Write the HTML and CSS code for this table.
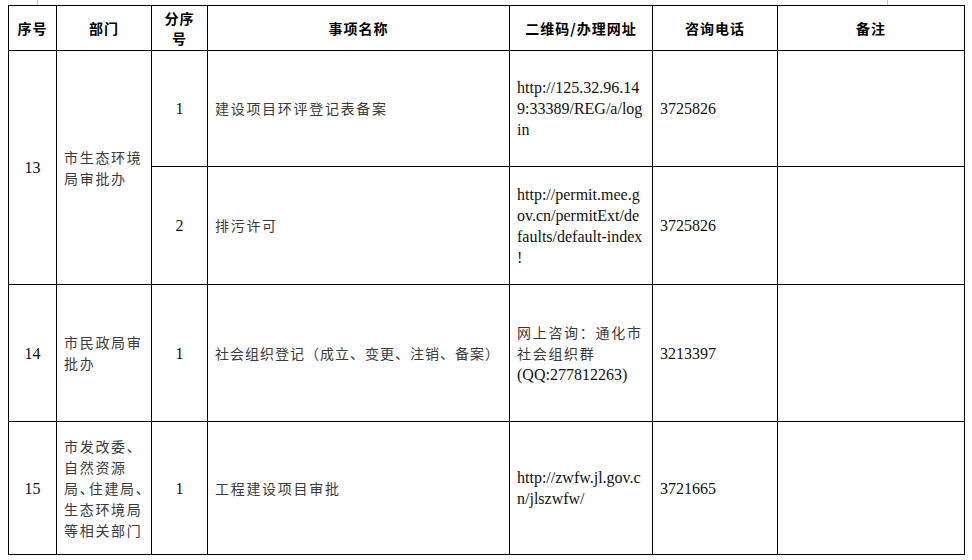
FILE: index.html
```html
<!DOCTYPE html>
<html lang="zh-CN">
<head>
<meta charset="utf-8">
<title>事项清单</title>
<link rel="stylesheet" href="styles.css">
</head>
<body>
<div class="mark mark-left"></div>
<div class="mark mark-right"></div>
<table class="grid">
  <colgroup>
    <col class="c1"><col class="c2"><col class="c3"><col class="c4"><col class="c5"><col class="c6"><col class="c7">
  </colgroup>
  <thead>
    <tr class="r-head">
      <th>序号</th>
      <th>部门</th>
      <th>分序<br>号</th>
      <th>事项名称</th>
      <th>二维码/办理网址</th>
      <th>咨询电话</th>
      <th>备注</th>
    </tr>
  </thead>
  <tbody>
    <tr class="r1">
      <td class="num" rowspan="2">13</td>
      <td class="dept" rowspan="2">市生态环境<br>局审批办</td>
      <td class="num">1</td>
      <td class="item">建设项目环评登记表备案</td>
      <td class="url">http://125.32.96.14<br>9:33389/REG/a/log<br>in</td>
      <td class="tel">3725826</td>
      <td></td>
    </tr>
    <tr class="r2">
      <td class="num">2</td>
      <td class="item">排污许可</td>
      <td class="url">http://permit.mee.g<br>ov.cn/permitExt/de<br>faults/default-index<br>!</td>
      <td class="tel">3725826</td>
      <td></td>
    </tr>
    <tr class="r3">
      <td class="num">14</td>
      <td class="dept">市民政局审<br>批办</td>
      <td class="num">1</td>
      <td class="item item-long">社会组织登记（成立、变更、注销、备案）</td>
      <td class="url"><span class="cn">网上咨询：通化市<br>社会组织群</span><br>(QQ:277812263)</td>
      <td class="tel">3213397</td>
      <td></td>
    </tr>
    <tr class="r4">
      <td class="num">15</td>
      <td class="dept">市发改委、<br>自然资源<br>局<span class="tight">、</span>住建局、<br>生态环境局<br>等相关部门</td>
      <td class="num">1</td>
      <td class="item">工程建设项目审批</td>
      <td class="url">http://zwfw.jl.gov.c<br>n/jlszwfw/</td>
      <td class="tel">3721665</td>
      <td></td>
    </tr>
  </tbody>
</table>
</body>
</html>
```

FILE: styles.css
```css
html, body {
  margin: 0;
  padding: 0;
  background: #fff;
}
body {
  padding: 5px 0 0 8px;
  position: relative;
  font-family: "Liberation Serif", "Noto Sans CJK SC", serif;
  color: #111;
}
.mark {
  position: absolute;
  top: 0;
  width: 1px;
  height: 5px;
  background: #c8c8c8;
}
.mark-left { left: 37px; }
.mark-right { left: 887px; }

.grid {
  border-collapse: collapse;
  table-layout: fixed;
  width: 956px;
}
.c1 { width: 48px; }
.c2 { width: 95px; }
.c3 { width: 56px; }
.c4 { width: 302px; }
.c5 { width: 143px; }
.c6 { width: 125px; }
.c7 { width: 187px; }

.grid th, .grid td {
  border: 1px solid #000;
  padding: 0 7px;
  vertical-align: middle;
}
.grid th {
  font-family: "Noto Sans CJK SC", sans-serif;
  font-weight: 700;
  font-size: 14px;
  line-height: 20px;
  text-align: center;
  color: #000;
  letter-spacing: 1px;
  padding: 0 2px;
}
.r-head { height: 45px; }
.r1 { height: 116px; }
.r2 { height: 118px; }
.r3 { height: 137px; }
.r4 { height: 133px; }

.num {
  text-align: center;
  font-size: 16px;
  line-height: 21px;
}
.dept, .item, .cn {
  font-family: "Noto Sans CJK SC", sans-serif;
  font-size: 14px;
  line-height: 21px;
  letter-spacing: 1.7px;
  color: #3a3a3a;
}
.dept, .item {
  white-space: nowrap;
}
.dept { padding-left: 8px; padding-right: 0; }
.item { padding-left: 8px; }
.item-long { letter-spacing: 1px; }
.tight { letter-spacing: -5px; }
.url {
  font-size: 16px;
  line-height: 21px;
  color: #111;
}
.tel {
  font-size: 16px;
  line-height: 21px;
  color: #111;
  padding-left: 6px;
}
```
